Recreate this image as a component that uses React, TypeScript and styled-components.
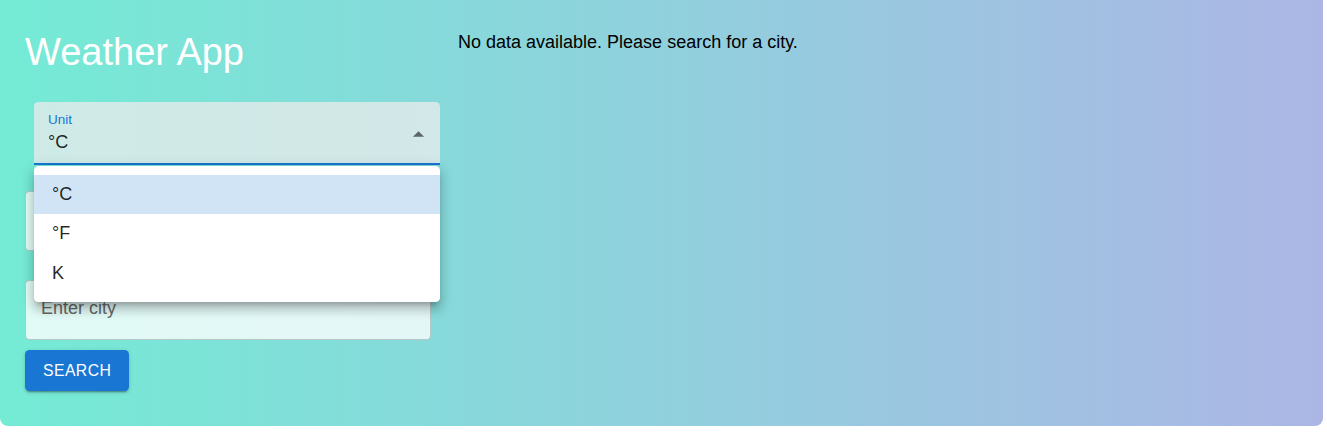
import { useState } from "react";
import styled, { createGlobalStyle } from "styled-components";

const GlobalStyle = createGlobalStyle`
	body {
		margin: 0;
		background: #fff;
		font-family: "Liberation Sans", Arial, sans-serif;
	}
`;

const units = ["°C", "°F", "K"];

const App = () => {
	const [unit, setUnit] = useState("°C");
	const [city, setCity] = useState("");

	return (
		<>
			<GlobalStyle />
			<Container>
				<Sidebar>
					<Title>Weather App</Title>

					<SelectWrap>
						<SelectField>
							<Label>Unit</Label>
							<Value>{unit}</Value>
							<Arrow viewBox="0 0 24 24">
								<path d="M7 14l5-5 5 5z" fill="currentColor" />
							</Arrow>
						</SelectField>
						<Menu>
							{units.map((u) => (
								<MenuItem
									key={u}
									selected={u === unit}
									onClick={() => setUnit(u)}
								>
									{u}
								</MenuItem>
							))}
						</Menu>
					</SelectWrap>

					<Input aria-label="Country" />
					<Input
						placeholder="Enter city"
						value={city}
						onChange={(e) => setCity(e.target.value)}
					/>
					<Button>Search</Button>
				</Sidebar>

				<Message>No data available. Please search for a city.</Message>
			</Container>
		</>
	);
};

const Container = styled.div`
	display: flex;
	align-items: flex-start;
	width: 1323px;
	height: 426px;
	box-sizing: border-box;
	padding: 31px 0 0 25px;
	border-radius: 0 0 8px 8px;
	background: linear-gradient(to right, #74ebd5, #acb6e5);
`;

const Sidebar = styled.div`
	display: flex;
	flex-direction: column;
	align-items: flex-start;
	width: 415px;
`;

const Title = styled.h1`
	margin: 0 0 28px 0;
	font-size: 38px;
	font-weight: 400;
	line-height: 43px;
	color: #fff;
`;

const SelectWrap = styled.div`
	position: relative;
	margin: 0 0 26px 9px;
	width: 406px;
`;

const SelectField = styled.div`
	position: relative;
	height: 63px;
	box-sizing: border-box;
	padding: 11px 14px 0;
	border-radius: 4.5px 4.5px 0 0;
	border-bottom: 2px solid #1976d2;
	background-color: rgba(255, 255, 255, 0.74);
	background-image: linear-gradient(rgba(0, 0, 0, 0.06), rgba(0, 0, 0, 0.06));
`;

const Label = styled.div`
	font-size: 13.5px;
	line-height: 13px;
	color: #1976d2;
`;

const Value = styled.div`
	margin-top: 4px;
	font-size: 18px;
	line-height: 25px;
	color: rgba(0, 0, 0, 0.87);
`;

const Arrow = styled.svg`
	position: absolute;
	right: 8px;
	top: 19px;
	width: 27px;
	height: 27px;
	color: #5f6565;
`;

const Menu = styled.ul`
	position: absolute;
	left: 0;
	right: 0;
	top: 64px;
	z-index: 10;
	margin: 0;
	padding: 9px 0;
	list-style: none;
	background: #fff;
	border-radius: 4.5px;
	box-shadow:
		0px 5px 5px -3px rgba(0, 0, 0, 0.2),
		0px 8px 10px 1px rgba(0, 0, 0, 0.14),
		0px 3px 14px 2px rgba(0, 0, 0, 0.12);
`;

const MenuItem = styled.li<{ selected?: boolean }>`
	padding: 7px 18px;
	font-size: 18px;
	line-height: 25.3px;
	color: rgba(0, 0, 0, 0.87);
	cursor: pointer;
	background: ${({ selected }) =>
		selected ? "rgba(25, 118, 210, 0.2)" : "transparent"};
`;

const Input = styled.input`
	width: 406px;
	height: 60px;
	box-sizing: border-box;
	margin-bottom: 29px;
	padding: 0 15px 4px;
	border: 1px solid rgba(0, 0, 0, 0.2);
	border-radius: 4.5px;
	background: rgba(255, 255, 255, 0.78);
	font-family: "Liberation Sans", Arial, sans-serif;
	font-size: 18px;
	color: rgba(0, 0, 0, 0.87);
	outline: none;

	&::placeholder {
		color: #666;
	}

	& + & {
		margin-bottom: 10px;
	}
`;

const Button = styled.button`
	padding: 6.75px 18px;
	border: none;
	border-radius: 4.5px;
	background: #1976d2;
	color: #fff;
	font-family: "Liberation Sans", Arial, sans-serif;
	font-size: 15.75px;
	line-height: 27.5px;
	letter-spacing: 0.45px;
	text-transform: uppercase;
	cursor: pointer;
	box-shadow:
		0px 3px 1px -2px rgba(0, 0, 0, 0.2),
		0px 2px 2px 0px rgba(0, 0, 0, 0.14),
		0px 1px 5px 0px rgba(0, 0, 0, 0.12);
`;

const Message = styled.p`
	margin: 1px 0 0 18px;
	font-size: 18px;
	color: #000;
`;

export default App;
